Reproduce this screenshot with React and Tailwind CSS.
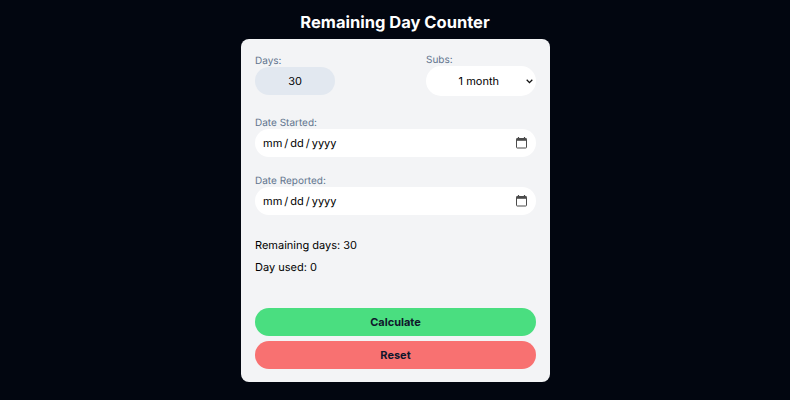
import React from "react";

function DateField({ label, id }) {
  return (
    <div className="flex flex-col">
      <label htmlFor={id} className="h-[14px] text-[10px] leading-[17px] text-slate-500">{label}</label>
      <div id={id} className="flex h-7 items-center justify-between rounded-full bg-white pl-2 pr-[9px] text-[11px]">
        <div className="flex">
          <span>mm</span><span className="px-[2px]">/</span><span>dd</span><span className="px-[2px]">/</span><span>yyyy</span>
        </div>
        <svg className="mb-px" width="11" height="12" viewBox="0 0 11 12" fill="none" stroke="#4b4b4b" strokeWidth="1">
          <rect x=".5" y="1.5" width="10" height="9.5" rx=".7" />
          <path d="M.5 2.6h10" strokeWidth="2.4" />
          <path d="M2.5 0v2M8.5 0v2" strokeWidth="1.2" />
        </svg>
      </div>
    </div>
  );
}

export default function App() {
  return (
    <main className="flex h-[400px] w-[790px] flex-col items-center bg-[#020610] pt-[11px] font-['Inter',sans-serif] text-[11px] text-black [text-rendering:geometricPrecision]">
      <h1 className="h-7 text-[16.5px] font-bold leading-[22px] text-white">Remaining Day Counter</h1>
      <section className="ml-px flex h-[343px] w-[309px] flex-col rounded-lg bg-gray-100 px-[14px] pt-[13px]">
        <div className="flex h-[63px] justify-between">
          <div className="flex w-20 flex-col pt-[1px]">
            <span className="h-[14px] text-[10px] leading-[17px] text-slate-500">Days:</span>
            <div className="flex h-7 items-center justify-center rounded-full bg-slate-200">30</div>
          </div>
          <div className="flex w-[110px] flex-col">
            <span className="h-[14px] text-[10px] leading-[17px] text-slate-500">Subs:</span>
            <div className="flex h-[30px] items-center justify-end rounded-full bg-white pr-[3px]">
              <span className="mr-[27px]">1 month</span>
              <svg width="7" height="5" viewBox="0 0 7 5" fill="none" stroke="#111" strokeWidth="1.3"><path d="m.7.8 2.8 2.8L6.3.8" /></svg>
            </div>
          </div>
        </div>
        <div className="flex flex-col gap-4">
          <DateField label="Date Started:" id="started" />
          <DateField label="Date Reported:" id="reported" />
        </div>
        <div className="mt-[19px] h-[74px] leading-[22px]">
          <p>Remaining days: 30</p>
          <p>Day used: 0</p>
        </div>
        <div className="flex flex-col gap-[5px] font-bold text-slate-900">
          <button className="h-7 rounded-full bg-[#4ade80] pt-px">Calculate</button>
          <button className="h-7 rounded-full bg-[#f87171] pt-px">Reset</button>
        </div>
      </section>
    </main>
  );
}
